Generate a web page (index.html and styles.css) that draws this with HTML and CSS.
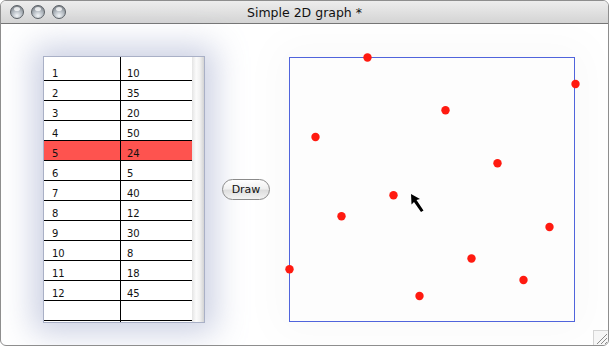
FILE: index.html
```html
<!DOCTYPE html>
<html lang="en">
    <head>
        <meta charset="UTF-8">
        <title>Simple 2D graph</title>
        <link rel="stylesheet" href="styles.css">
    </head>
    <body>
        <div class="window">
            <div class="titlebar">
                <div class="lights"><span></span><span></span><span></span></div>
                <div class="title">Simple 2D graph *</div>
                <div></div>
            </div>
            <div class="content">
                <div class="tablebox">
                    <div class="cells">
                        <div class="row first"><div class="c1">1</div><div class="c2">10</div></div>
                        <div class="row"><div class="c1">2</div><div class="c2">35</div></div>
                        <div class="row"><div class="c1">3</div><div class="c2">20</div></div>
                        <div class="row"><div class="c1">4</div><div class="c2">50</div></div>
                        <div class="row sel"><div class="c1">5</div><div class="c2">24</div></div>
                        <div class="row"><div class="c1">6</div><div class="c2">5</div></div>
                        <div class="row"><div class="c1">7</div><div class="c2">40</div></div>
                        <div class="row"><div class="c1">8</div><div class="c2">12</div></div>
                        <div class="row"><div class="c1">9</div><div class="c2">30</div></div>
                        <div class="row"><div class="c1">10</div><div class="c2">8</div></div>
                        <div class="row"><div class="c1">11</div><div class="c2">18</div></div>
                        <div class="row"><div class="c1">12</div><div class="c2">45</div></div>
                        <div class="row"><div class="c1"></div><div class="c2"></div></div>
                    </div>
                    <div class="scroll"></div>
                </div>
                <button class="draw">Draw</button>
                <div class="graph">
                    <svg class="plot" width="286" height="265" viewBox="0 0 286 265">
                        <g fill="#ff1a10">
                            <circle cx="0.5" cy="212.3" r="4.2"/>
                            <circle cx="26.5" cy="80" r="4.2"/>
                            <circle cx="52.5" cy="159.3" r="4.2"/>
                            <circle cx="78.5" cy="0.5" r="4.2"/>
                            <circle cx="104.5" cy="138.2" r="4.2"/>
                            <circle cx="130.5" cy="239" r="4.2"/>
                            <circle cx="156.5" cy="53.3" r="4.2"/>
                            <circle cx="182.5" cy="201.5" r="4.2"/>
                            <circle cx="208.5" cy="106.3" r="4.2"/>
                            <circle cx="234.5" cy="223" r="4.2"/>
                            <circle cx="260.5" cy="170" r="4.2"/>
                            <circle cx="286.5" cy="27" r="4.2"/>
                        </g>
                        <polygon fill="#000" points="122,137 122.5,147.5 125,145 132,155 134.5,153.5 127.5,143 131,142"/>
                    </svg>
                </div>
            </div>
            <div class="grip">
                <svg width="14" height="14" viewBox="0 0 14 14">
                    <g stroke="#8c8c8c" stroke-width="1">
                        <line x1="3" y1="13" x2="13" y2="3"/>
                        <line x1="7" y1="13" x2="13" y2="7"/>
                        <line x1="11" y1="13" x2="13" y2="11"/>
                    </g>
                </svg>
            </div>
        </div>
    </body>
</html>
```

FILE: styles.css
```css
*{
    margin: 0;
    padding: 0;
    box-sizing: border-box;
}
body{background: #fff; font-family: "DejaVu Sans", Verdana, sans-serif;}
.window{
    width: 609px;
    height: 346px;
    border: 1px solid #8e8e8e;
    border-radius: 6px;
    overflow: hidden;
    position: relative;
    background: #fff;
}
.titlebar{
    height: 23px;
    border-bottom: 1px solid #767676;
    background: linear-gradient(#ededed, #d4d4d4);
    display: grid;
    grid-template-columns: 1fr auto 1fr;
    align-items: center;
}
.lights{display: flex; gap: 7px; padding-left: 9px;}
.lights span{
    width: 14px;
    height: 14px;
    border-radius: 50%;
    border: 1px solid #5b6066;
    background: radial-gradient(circle at 50% 80%, #f2f5f8 0, #b4bbc2 45%, #6a7076 100%);
    position: relative;
}
.lights span::after{
    content: "";
    position: absolute;
    left: 3px;
    top: 1px;
    width: 6px;
    height: 4px;
    border-radius: 50%;
    background: rgba(255,255,255,.75);
}
.title{font-size: 12.5px; color: #111;}

.content{
    display: flex;
    align-items: center;
    padding: 32px 0 0 42px;
}
.tablebox{
    width: 162px;
    height: 267px;
    border: 1px solid #a9b0c6;
    display: flex;
    background: #fff;
    box-shadow: 0 0 30px 10px rgba(140, 150, 192, .45);
}
.cells{
    width: 148px;
    background: linear-gradient(to right, transparent 76px, #000 76px, #000 77px, transparent 77px);
}
.row{display: flex; height: 20px; border-bottom: 1px solid #000; font-size: 10px; line-height: 13px; color: #111;}
.row.first{height: 24px;}
.row.first .c1, .row.first .c2{padding-top: 10px;}
.c1, .c2{padding-top: 6px; padding-left: 8px;}
.c1{width: 77px;}
.c2{width: 71px; padding-left: 6px;}
.row.sel{background: linear-gradient(to right, #fe534f 76px, #000 76px, #000 77px, #fe534f 77px);}
.scroll{
    width: 12px;
    background: linear-gradient(to right, #e4e4e4, #fbfbfb 35%, #f1f1f1 65%, #d3d3d3);
}
.draw{
    margin-left: 17px;
    width: 48px;
    height: 21px;
    border: 1px solid #8a8a8a;
    border-radius: 11px;
    background: linear-gradient(#ffffff, #f1f1f1 45%, #dedede 55%, #f4f4f4);
    font-family: "DejaVu Sans", sans-serif;
    font-size: 11px;
    color: #111;
}
.graph{
    margin-left: 19px;
    width: 286px;
    height: 265px;
    border: 1px solid #5064dc;
    background: #fdfdfd;
    position: relative;
    box-shadow: 0 0 40px 14px rgba(0,0,0,.025);
}
.plot{position: absolute; left: -1px; top: -1px; overflow: visible;}
.grip{
    position: absolute;
    right: 0;
    bottom: 0;
    width: 15px;
    height: 15px;
    border-left: 1px solid #d4d4d4;
    border-top: 1px solid #d4d4d4;
    background: #f6f6f6;
}
.grip svg{display: block;}
```
